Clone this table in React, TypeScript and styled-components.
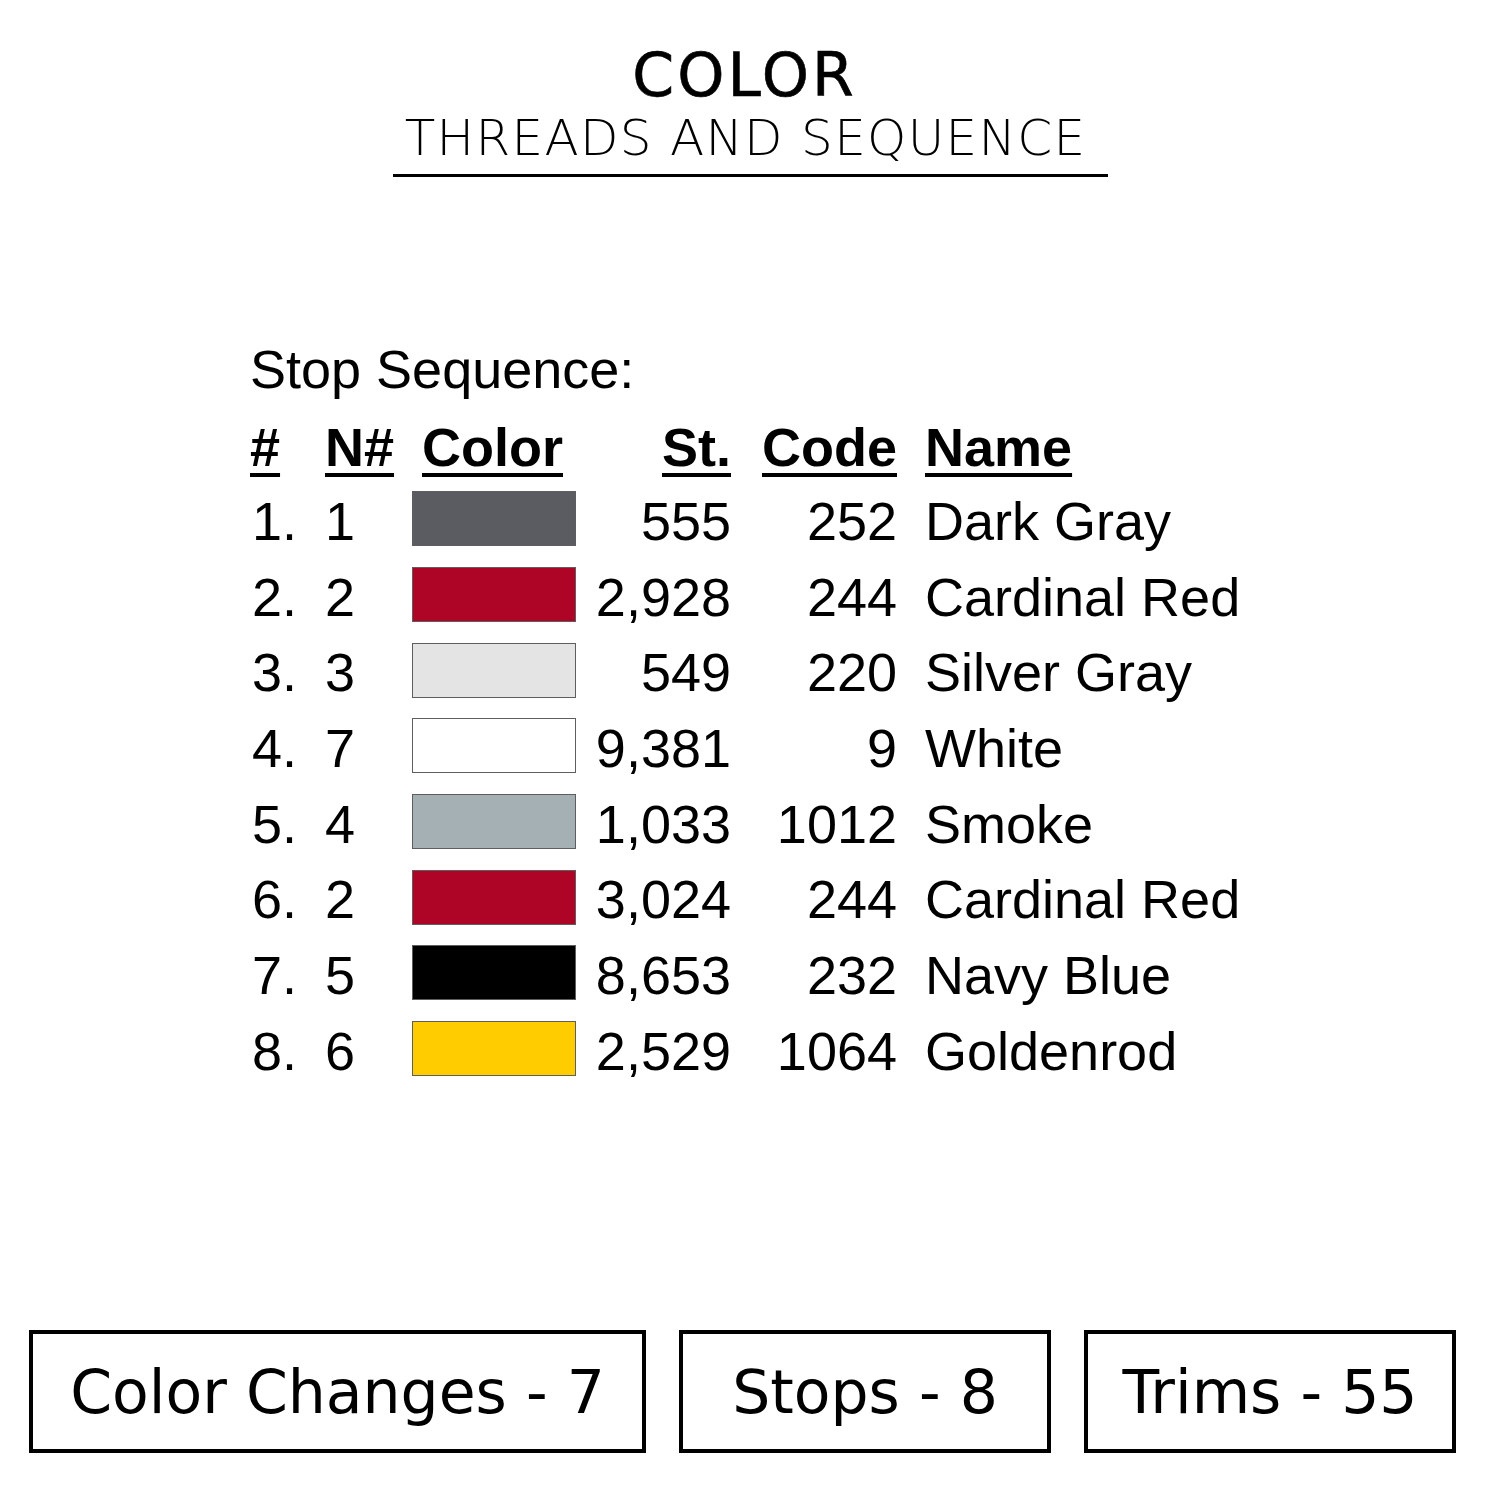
import React from "react";
import styled, { createGlobalStyle } from "styled-components";

type Thread = {
  n: number;
  color: string;
  stitches: string;
  code: string;
  name: string;
};

const threads: Thread[] = [
  { n: 1, color: "#5b5c61", stitches: "555", code: "252", name: "Dark Gray" },
  { n: 2, color: "#ae0426", stitches: "2,928", code: "244", name: "Cardinal Red" },
  { n: 3, color: "#e4e4e4", stitches: "549", code: "220", name: "Silver Gray" },
  { n: 7, color: "#ffffff", stitches: "9,381", code: "9", name: "White" },
  { n: 4, color: "#a4b0b4", stitches: "1,033", code: "1012", name: "Smoke" },
  { n: 2, color: "#ae0426", stitches: "3,024", code: "244", name: "Cardinal Red" },
  { n: 5, color: "#000000", stitches: "8,653", code: "232", name: "Navy Blue" },
  { n: 6, color: "#ffcc00", stitches: "2,529", code: "1064", name: "Goldenrod" },
];

const GlobalStyle = createGlobalStyle`
  html, body {
    margin: 0;
    padding: 0;
    background: #fff;
  }
  * {
    box-sizing: border-box;
  }
`;

export default function App() {
  return (
    <>
      <GlobalStyle />
      <SPage>
        <SHeading>
          <STitle>COLOR</STitle>
          <SSubtitle>THREADS AND SEQUENCE</SSubtitle>
        </SHeading>

        <STable>
          <SCaption>Stop Sequence:</SCaption>
          <SHeadRow>
            <SHeadCell>#</SHeadCell>
            <SHeadCell>N#</SHeadCell>
            <SHeadCell $indent={10}>Color</SHeadCell>
            <SHeadCell $right>St.</SHeadCell>
            <SHeadCell $right>Code</SHeadCell>
            <SHeadCell $indent={28}>Name</SHeadCell>
          </SHeadRow>
          {threads.map((t, i) => (
            <SRow key={i}>
              <SCell $indent={2}>{i + 1}.</SCell>
              <SCell>{t.n}</SCell>
              <SCell>
                <SSwatch $color={t.color} />
              </SCell>
              <SCell $right>{t.stitches}</SCell>
              <SCell $right>{t.code}</SCell>
              <SCell $indent={28}>{t.name}</SCell>
            </SRow>
          ))}
        </STable>

        <SStats>
          <SStatBox $width={617}>Color Changes - 7</SStatBox>
          <SStatBox $width={372}>Stops - 8</SStatBox>
          <SStatBox $width={372}>Trims - 55</SStatBox>
        </SStats>
      </SPage>
    </>
  );
}

const SPage = styled.div`
  display: flex;
  flex-direction: column;
  width: 1500px;
  height: 1500px;
  padding-top: 40px;
  color: #000;
`;

const SHeading = styled.div`
  display: flex;
  flex-direction: column;
  align-items: center;
  align-self: center;
  width: 715px;
  margin-left: 1px;
  border-bottom: 3px solid #000;
  padding-bottom: 8px;
  font-family: "DejaVu Sans", "Noto Sans", sans-serif;
`;

const STitle = styled.h1`
  margin: 0 12px 0 0;
  font-size: 60px;
  line-height: 70px;
  font-weight: 500;
  letter-spacing: 3px;
  -webkit-text-stroke: 0.6px #000;
`;

const SSubtitle = styled.h2`
  margin: 0 10px 0 0;
  font-size: 50px;
  line-height: 56px;
  font-weight: 300;
  letter-spacing: 1.3px;
`;

const STable = styled.div`
  display: flex;
  flex-direction: column;
  margin: 160px 0 0 250px;
  font-family: "Liberation Sans", Arial, sans-serif;
  font-size: 54px;
`;

const SCaption = styled.div`
  line-height: 64px;
  margin-bottom: 10px;
`;

const cols = "75px 87px 178px 141px 166px 1fr";

const SHeadRow = styled.div`
  display: grid;
  grid-template-columns: ${cols};
  height: 72px;
  align-items: center;
  font-weight: 700;
`;

const SRow = styled.div`
  display: grid;
  grid-template-columns: ${cols};
  height: 75.7px;
  align-items: center;
`;

const SHeadCell = styled.div<{ $right?: boolean; $indent?: number }>`
  text-align: ${({ $right }) => ($right ? "right" : "left")};
  padding-left: ${({ $indent }) => $indent ?? 0}px;
  text-decoration: underline;
  text-decoration-thickness: 4px;
  text-underline-offset: 7px;
  white-space: nowrap;
`;

const SCell = styled.div<{ $right?: boolean; $indent?: number }>`
  display: flex;
  align-items: center;
  justify-content: ${({ $right }) => ($right ? "flex-end" : "flex-start")};
  padding-left: ${({ $indent }) => $indent ?? 0}px;
  white-space: nowrap;
  line-height: 1;
`;

const SSwatch = styled.div<{ $color: string }>`
  width: 164px;
  height: 55px;
  margin-top: -4px;
  background: ${({ $color }) => $color};
  border: 1.5px solid #5e5e5e;
`;

const SStats = styled.div`
  display: flex;
  gap: 33px;
  margin-top: auto;
  margin-bottom: 47px;
  padding-left: 29px;
`;

const SStatBox = styled.div<{ $width: number }>`
  display: flex;
  align-items: center;
  justify-content: center;
  width: ${({ $width }) => $width}px;
  height: 123px;
  border: 4px solid #000;
  font-family: "DejaVu Sans", "Noto Sans", sans-serif;
  font-size: 60px;
`;
